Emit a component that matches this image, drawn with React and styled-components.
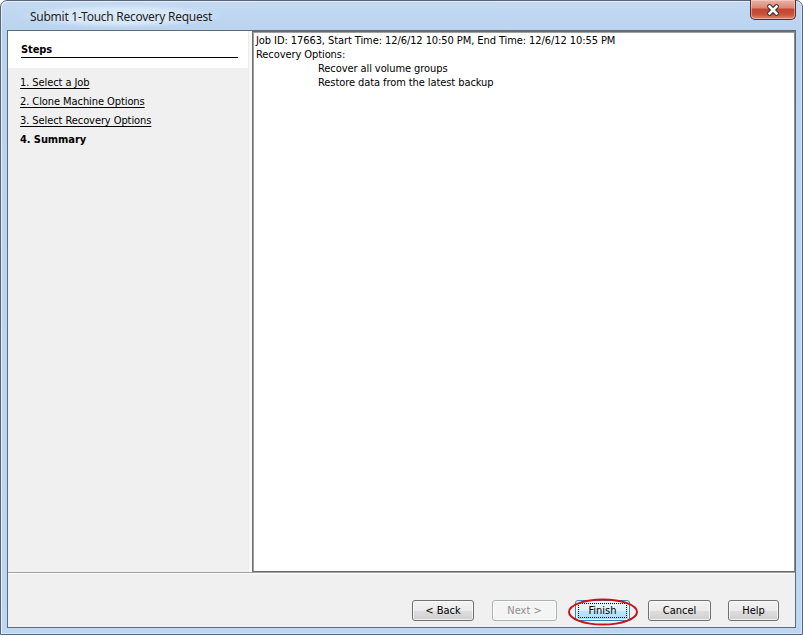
import React from 'react';
import styled, { createGlobalStyle } from 'styled-components';

const GlobalStyle = createGlobalStyle`
  html, body {
    margin: 0;
    padding: 0;
    background: #ffffff;
  }
  body {
    font-family: "DejaVu Sans Condensed", "DejaVu Sans", sans-serif;
    font-stretch: condensed;
    font-size: 11px;
    letter-spacing: -0.08px;
    color: #000;
  }
`;

const steps = [
  { label: '1. Select a Job', done: true },
  { label: '2. Clone Machine Options', done: true },
  { label: '3. Select Recovery Options', done: true },
  { label: '4. Summary', done: false },
];

const buttons = [
  { label: '< Back', width: 62 },
  { label: 'Next >', width: 65, disabled: true },
  { label: 'Finish', width: 55, focused: true },
  { label: 'Cancel', width: 63 },
  { label: 'Help', width: 51 },
];

function App() {
  return (
    <>
      <GlobalStyle />
      <Window>
        <TitleBar>
          <TitleText>Submit 1-Touch Recovery Request</TitleText>
          <CloseButton>
            <svg width="20" height="12" viewBox="0 0 20 12">
              <path
                d="M6.5 2.5 L13.5 9.5 M13.5 2.5 L6.5 9.5"
                stroke="#3b2a28"
                strokeWidth="4.6"
                strokeLinecap="round"
                fill="none"
              />
              <path
                d="M6.5 2.5 L13.5 9.5 M13.5 2.5 L6.5 9.5"
                stroke="#ffffff"
                strokeWidth="2.6"
                strokeLinecap="square"
                fill="none"
              />
            </svg>
          </CloseButton>
        </TitleBar>

        <Content>
          <Main>
            <StepsPanel>
              <StepsHeader>
                <StepsTitle>Steps</StepsTitle>
              </StepsHeader>
              <StepList>
                {steps.map((s) => (
                  <StepItem key={s.label} $current={!s.done}>
                    {s.label}
                  </StepItem>
                ))}
              </StepList>
            </StepsPanel>
            <Divider />
            <SummaryPanel>
              <Line>Job ID: 17663, Start Time: 12/6/12 10:50 PM, End Time: 12/6/12 10:55 PM</Line>
              <Line>Recovery Options:</Line>
              <Line $indent>Recover all volume groups</Line>
              <Line $indent>Restore data from the latest backup</Line>
            </SummaryPanel>
          </Main>

          <ButtonBar>
            {buttons.map((b, i) => (
              <Button
                key={b.label}
                $width={b.width}
                $focused={b.focused}
                $last={i === buttons.length - 1}
                disabled={b.disabled}
              >
                {b.focused ? <FocusRing>{b.label}</FocusRing> : b.label}
              </Button>
            ))}
            <Highlight width="72" height="30" viewBox="0 0 72 30">
              <ellipse cx="36" cy="15" rx="34" ry="12.5" fill="none" stroke="#c3141e" strokeWidth="2" />
            </Highlight>
          </ButtonBar>
        </Content>
      </Window>
    </>
  );
}

export default App;

const Window = styled.div`
  position: relative;
  width: 803px;
  height: 635px;
  box-sizing: border-box;
  border: 1px solid #56657a;
  border-radius: 7px 7px 0 0;
  background: linear-gradient(180deg, #c4daf2 0px, #bad3ef 30px, #bdd6f2 100%);
  box-shadow: inset 1px 1px 0 rgba(255, 255, 255, 0.6), inset -1px -1px 0 rgba(255, 255, 255, 0.4);
  padding: 0 6px 6px 6px;
  display: flex;
  flex-direction: column;
`;

const TitleBar = styled.div`
  height: 29px;
  display: flex;
  align-items: flex-start;
`;

const TitleText = styled.div`
  margin: 3px 0 0 12px;
  height: 24px;
  padding: 0 11px;
  display: flex;
  align-items: center;
  font-family: "Noto Sans", "Open Sans", sans-serif;
  font-stretch: normal;
  font-size: 12px;
  letter-spacing: -0.26px;
  color: #1e1e1e;
  background: radial-gradient(ellipse closest-side at center, rgba(220, 235, 250, 0.85) 60%, rgba(220, 235, 250, 0) 100%);
`;

const CloseButton = styled.div`
  margin: -1px 0 0 auto;
  width: 44px;
  height: 19px;
  border: 1px solid #5a2a22;
  border-top: none;
  border-radius: 0 0 5px 5px;
  background: linear-gradient(180deg, #eab3a5 0%, #d98a78 40%, #c54630 50%, #c8503a 75%, #dc8a6e 100%);
  box-shadow: inset 0 0 0 1px rgba(255, 220, 210, 0.5);
  display: flex;
  align-items: center;
  justify-content: center;
`;

const Content = styled.div`
  flex: 1;
  display: flex;
  flex-direction: column;
  border: 1px solid #5f6a78;
  background: #f0f0f0;
  min-height: 0;
`;

const Main = styled.div`
  height: 541px;
  display: flex;
  border-bottom: 1px solid #a0a0a0;
  box-shadow: 0 1px 0 #ffffff;
`;

const StepsPanel = styled.div`
  width: 240px;
  display: flex;
  flex-direction: column;
  background: #f0f0f0;
`;

const StepsHeader = styled.div`
  background: #ffffff;
  padding: 12px 10px 10px 13px;
`;

const StepsTitle = styled.div`
  font-weight: bold;
  line-height: 14px;
  border-bottom: 1px solid #000;
`;

const StepList = styled.div`
  padding: 5px 0 0 12px;
  display: flex;
  flex-direction: column;
`;

const StepItem = styled.div`
  line-height: 19px;
  color: #000;
  font-weight: ${(p) => (p.$current ? 'bold' : 'normal')};
  text-decoration: ${(p) => (p.$current ? 'none' : 'underline')};
  text-underline-offset: 2px;
  align-self: flex-start;
`;

const Divider = styled.div`
  width: 4px;
  background: #f8f8f8;
  border-left: 1px solid #ececec;
  box-sizing: border-box;
`;

const SummaryPanel = styled.div`
  flex: 1;
  background: #ffffff;
  border: 1px solid #6e6e6e;
  border-right-color: #8a8a8a;
  box-shadow: inset 1px 1px 0 #a0a0a0;
  padding: 2px 3px;
`;

const Line = styled.div`
  line-height: 14px;
  white-space: nowrap;
  padding-left: ${(p) => (p.$indent ? '62px' : '0')};
`;

const ButtonBar = styled.div`
  position: relative;
  flex: 1;
  display: flex;
  justify-content: flex-end;
  align-items: flex-end;
  gap: 18px;
  padding: 0 16px 6px 0;
  margin-top: 1px;
`;

const Button = styled.button`
  width: ${(p) => p.$width}px;
  height: 21px;
  box-sizing: border-box;
  padding: 2px;
  margin-left: ${(p) => (p.$last ? '-1px' : '0')};
  font: inherit;
  color: #000;
  border: 1px solid ${(p) => (p.$focused ? '#3c7fb1' : '#707070')};
  border-radius: 3px;
  background: ${(p) =>
    p.$focused
      ? 'linear-gradient(180deg, #eaf6fd 0%, #d9f0fc 50%, #bee6fd 51%, #a7d9f5 100%)'
      : 'linear-gradient(180deg, #f2f2f2 0%, #ebebeb 50%, #dddddd 51%, #cfcfcf 100%)'};
  box-shadow: inset 0 0 0 1px rgba(255, 255, 255, 0.7);
  display: flex;
  align-items: center;
  justify-content: center;

  &:disabled {
    color: #8d8d8d;
    border-color: #adb2b5;
    background: #f4f4f4;
  }
`;

const FocusRing = styled.span`
  flex: 1;
  align-self: stretch;
  display: flex;
  align-items: center;
  justify-content: center;
  border: 1px dotted #000;
`;

const Highlight = styled.svg`
  position: absolute;
  left: 559px;
  bottom: 0px;
`;
